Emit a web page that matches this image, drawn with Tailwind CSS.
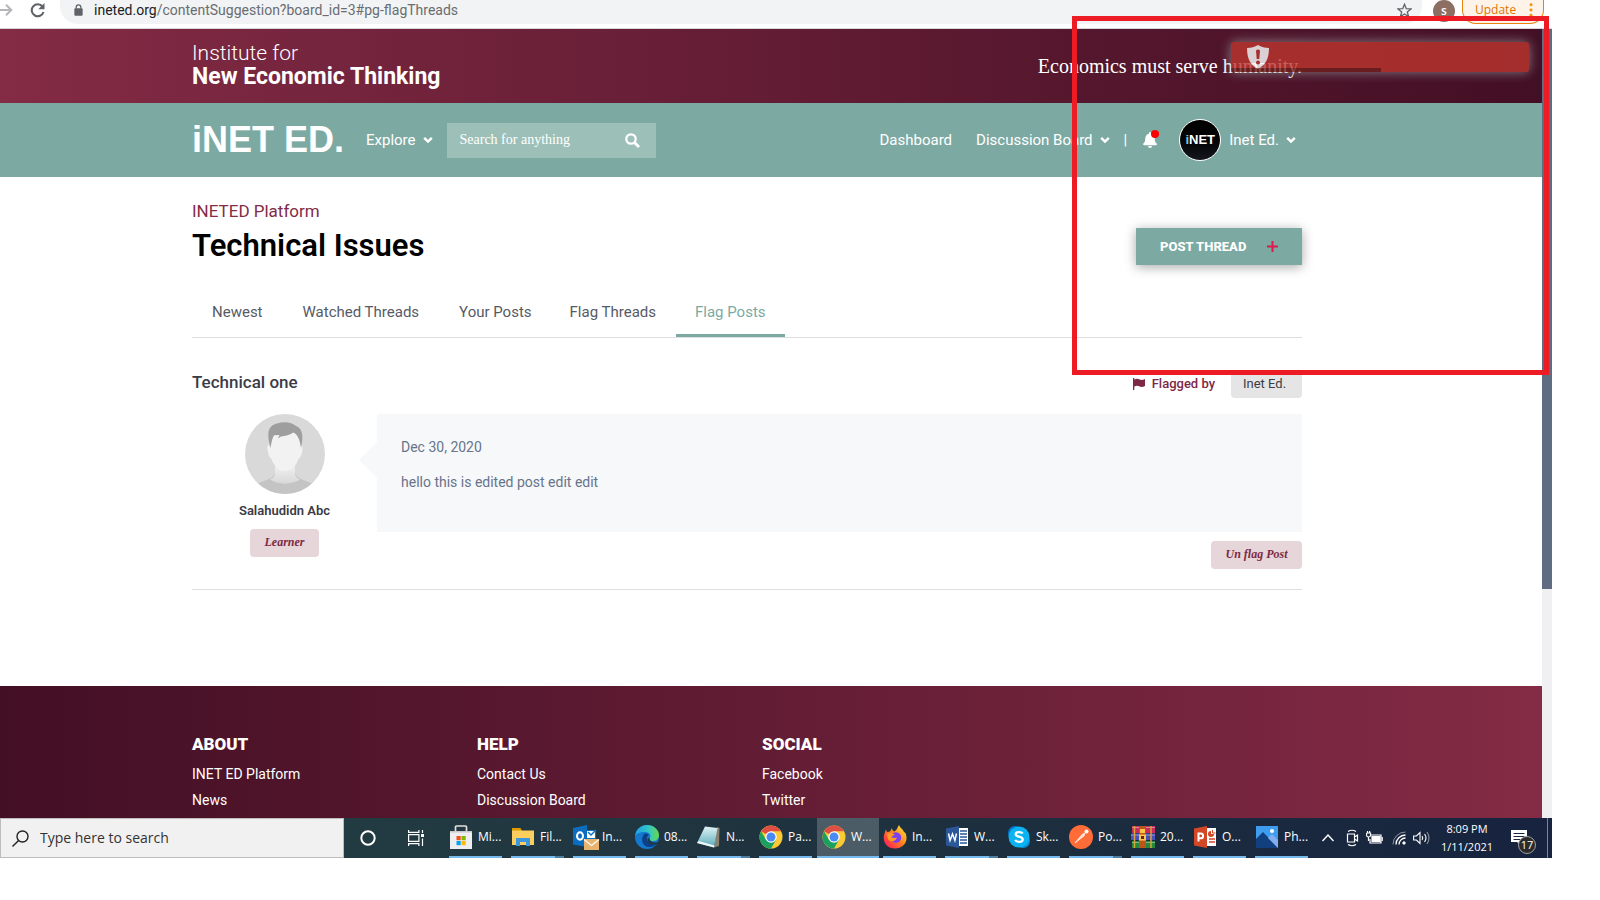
<!DOCTYPE html>
<html lang="en">
<head>
<meta charset="utf-8">
<title>INET ED - Technical Issues</title>
<script src="https://cdn.jsdelivr.net/npm/@tailwindcss/browser@4"></script>
</head>
<body class="bg-white pr-12 font-['Roboto',sans-serif] text-[#3b3b47]">
<svg class="hidden">
  <symbol id="chev" viewBox="0 0 10 8"><path d="M1.2 1.8 5 5.6 8.8 1.8" fill="none" stroke="currentColor" stroke-width="2.4"/></symbol>
  <symbol id="chrome" viewBox="0 0 48 48">
    <circle cx="24" cy="24" r="23" fill="#fbc934"/>
    <path d="M24 24 4.1 12.5A23 23 0 0 1 43.9 12.5H24Z" fill="#dd4f43"/>
    <path d="M4.1 12.5A23 23 0 0 0 24 47L34 29.7 24 24 14 29.7Z" fill="#1aa15f"/>
    <circle cx="24" cy="24" r="11.500" fill="#fff"/><circle cx="24" cy="24" r="9" fill="#4a8af4"/>
  </symbol>
</svg>

<div class="relative">
  <!-- Browser toolbar -->
  <div class="flex h-[29px] items-start border-b border-[#d5d7da] bg-white font-['Open_Sans',sans-serif]">
    <button aria-label="Forward" class="mt-1 h-3 w-[13px]"><svg viewBox="0 0 13 12" class="h-3 w-[13px]" fill="none" stroke="#b4b6b9" stroke-width="2"><path d="M0 6h11M6 .8 11.3 6 6 11.2"/></svg></button>
    <button aria-label="Reload" class="mt-[3px] ml-4 h-[15px] w-[17px]"><svg viewBox="0 0 16 15" class="h-[15px] w-[17px]"><path d="M13 3.6A6 6 0 1 0 14 9" fill="none" stroke="#5f6368" stroke-width="2.1"/><path d="M15 0v6.3H8.8Z" fill="#5f6368"/></svg></button>
    <div class="ml-[14px] flex h-6 flex-1 items-start rounded-b-[18px] bg-[#f1f3f4] pr-[10px] pl-[14px]">
      <svg viewBox="0 0 10 13" class="mt-1 h-3 w-[9px]"><path d="M2.4 5V3.4a2.6 2.6 0 0 1 5.2 0V5" fill="none" stroke="#5f6368" stroke-width="1.4"/><rect x=".4" y="4.6" width="9.2" height="8.2" rx="1" fill="#5f6368"/></svg>
      <p class="ml-[11px] font-['Roboto',sans-serif] text-sm leading-5 text-[#6a6d71]"><span class="text-[#202124]">ineted.org</span>/contentSuggestion?board_id=3#pg-flagThreads</p>
      <button aria-label="Bookmark" class="mt-[3px] ml-auto"><svg viewBox="0 0 16 16" class="h-[15px] w-[15px]"><path d="M8 1.300 9.900 6l5 .3-3.900 3.200 1.300 4.900L8 11.700l-4.300 2.700L5 9.500 1.100 6.300l5-.3Z" fill="none" stroke="#5f6368" stroke-width="1.400"/></svg></button>
    </div>
    <span class="ml-[11px] flex h-[22px] w-[22px] items-center justify-center rounded-full bg-[#8d6e63] text-xs font-semibold text-white">s</span>
    <button class="mr-2 ml-[7px] flex h-6 w-[82px] items-start justify-between rounded-b-[14px] border border-t-0 border-[#e8820c] bg-[#fdf3e8] pr-[10px] pl-3 text-xs leading-5 text-[#e37400]">Update
      <svg viewBox="0 0 4 16" class="mt-[3px] h-[14px] w-1" fill="#f29111"><circle cx="2" cy="2" r="1.700"/><circle cx="2" cy="8" r="1.700"/><circle cx="2" cy="14" r="1.700"/></svg></button>
  </div>

  <div class="flex">
    <div class="min-w-0 flex-1">
      <!-- Institute header -->
      <header class="flex h-[74px] items-center bg-linear-to-r from-[#842b45] to-[#430f24] pl-48 text-white">
        <div class="flex w-[1110px] items-center justify-between">
          <a href="#" class="block pb-[2px] leading-6"><span class="block text-[21px] font-light">Institute for</span><span class="block text-[23px] font-bold">New Economic Thinking</span></a>
          <p class="font-['Liberation_Serif',serif] text-xl">Economics must serve humanity.</p>
        </div>
      </header>
      <!-- Navigation -->
      <nav class="flex h-[74px] items-center bg-[#7da9a3] pl-48 text-[15px] text-white">
        <div class="flex w-[1110px] items-center">
          <a href="#" class="w-[150px] font-['Liberation_Sans',sans-serif] text-4xl leading-[44px] font-bold whitespace-nowrap">iNET ED.</a>
          <button class="ml-6 flex items-center gap-[7px]">Explore <svg class="h-2 w-[10px]"><use href="#chev"/></svg></button>
          <form class="ml-[14px] flex h-[35px] w-[209px] items-center bg-[#9cbfb8] pr-4 pl-[13px]">
            <input type="text" aria-label="Search for anything" placeholder="Search for anything" class="w-full min-w-0 bg-transparent font-['Liberation_Serif',serif] text-sm text-white outline-none placeholder:text-white">
            <button type="button" aria-label="Search"><svg viewBox="0 0 15 15" class="h-[15px] w-[15px]" fill="none" stroke="#fff"><circle cx="6" cy="6" r="4.700" stroke-width="2.300"/><path d="m9.500 9.500 4.500 4.500" stroke-width="2.900"/></svg></button>
          </form>
          <a href="#" class="ml-auto">Dashboard</a>
          <button class="ml-6 flex items-center gap-[7px]">Discussion Board <svg class="h-2 w-[10px]"><use href="#chev"/></svg></button>
          <span class="ml-[14px]">|</span>
          <button aria-label="Notifications" class="relative ml-4 h-4 w-[14px]"><svg viewBox="0 0 14 16" class="h-4 w-[14px]" fill="#fff"><path d="M7 0a1 1 0 0 0-1 1v.7C3.700 2.200 2.300 4 2.300 6.400c0 2.900-.9 4-1.900 5.100-.7.800-.2 1.700.7 1.700h11.800c.9 0 1.400-.9.700-1.700-1-1.100-1.900-2.200-1.900-5.100C11.700 4 10.300 2.200 8 1.700V1a1 1 0 0 0-1-1ZM5 14a2 2 0 0 0 4 0Z"/></svg><span class="absolute -top-[2px] -right-[2px] h-2 w-2 rounded-full bg-[#ff0000]"></span></button>
          <span class="ml-[22px] flex h-[42px] w-[42px] items-center justify-center rounded-full border border-white bg-linear-to-b from-black to-[#17181f] font-['Liberation_Sans',sans-serif] text-[13px] font-bold"><span class="text-[#7cc3e8]">i</span>NET</span>
          <button class="mr-[6px] ml-2 flex items-center gap-[7px]">Inet Ed. <svg class="h-2 w-[10px]"><use href="#chev"/></svg></button>
        </div>
      </nav>

      <!-- Board -->
      <main class="ml-48 min-h-[509px] w-[1110px] pt-[22px]">
        <div class="flex items-start justify-between">
          <div>
            <p class="text-[17px] leading-6 text-[#842b45]">INETED Platform</p>
            <h1 class="text-[31px] leading-[46px] font-semibold text-black">Technical Issues</h1>
          </div>
          <button class="mt-[29px] flex h-[37px] w-[166px] items-center justify-between bg-[#7da9a3] pr-6 pl-6 text-[13px] font-extrabold text-white shadow-[0_2px_12px_rgba(0,0,0,0.35)]">POST THREAD
            <svg viewBox="0 0 11 11" class="h-[11px] w-[11px]" stroke="#e0194f" stroke-width="2"><path d="M5.500 0v11M0 5.500h11"/></svg></button>
        </div>
        <div class="mt-5 flex h-[49px] border-b border-[#dfdfe0] text-[15px] text-[#565b66]">
          <a href="#" class="px-5 pt-3">Newest</a>
          <a href="#" class="px-5 pt-3">Watched Threads</a>
          <a href="#" class="px-5 pt-3">Your Posts</a>
          <a href="#" class="pr-5 pl-[18px] pt-3">Flag Threads</a>
          <a href="#" class="border-b-[3px] border-[#7da9a3] px-[19px] pt-3 text-[#7da9a3]">Flag Posts</a>
        </div>
        <div class="mt-8 flex h-7 items-center">
          <h2 class="pb-[2px] text-[17px] font-medium">Technical one</h2>
          <svg viewBox="0 0 12 12" class="ml-auto h-3 w-3" fill="#7d2945"><path d="M0 0h1.300v12H0ZM1.300 1.500c2.500-1.300 4-.7 5.400 0 1.500.7 3 .7 5.300-.5v7c-2.300 1.200-3.800 1.200-5.300.5-1.400-.7-2.900-1.300-5.400 0Z"/></svg>
          <span class="ml-[7px] text-[13px] font-medium text-[#7d2945]">Flagged by</span>
          <span class="ml-4 flex h-7 w-[71px] items-center rounded bg-[#e6e5e5] pl-3 text-[13px]">Inet Ed.</span>
        </div>
        <article class="mt-4 flex border-b border-[#dfdfe0] pb-5">
          <div class="flex w-[185px] flex-col items-center">
            <svg viewBox="0 0 80 80" class="h-20 w-20">
              <defs><clipPath id="disc"><circle cx="40" cy="40" r="40"/></clipPath><linearGradient id="neck" x2="0" y2="1"><stop offset=".3" stop-color="#ececec"/><stop offset="1" stop-color="#d8d8d8"/></linearGradient></defs>
              <g clip-path="url(#disc)"><path d="M0 0h80v80H0Z" fill="#d9d9d9"/>
              <path d="M8 72C20 65 28 66 30 59V48h20v11c2 7 10 6 22 13v8H8Z" fill="#c4c4c4"/>
              <path d="M25 65.500c4-2 5-3 5-8V48h20v9.500c0 5 1 6 5 8-7 5.500-23 5.500-30 0Z" fill="url(#neck)"/>
              <path d="M24.500 31c-2-.5-2.500 2-1.800 6 .6 3.500 1.800 7 3.800 8 2 6 7 12 13.500 12S51.500 51 53.500 45c2-1 3.200-4.500 3.800-8 .7-4 .2-6.500-1.800-6V17h-31Z" fill="#f2f2f2"/>
              <path d="M25.500 34C22 20 22 12 32 9.500c7-2.500 15-1.500 19 2.500 6 2 8 9 5 22-1-8-3-13-7.500-15.500-3.500 2.500-8 3.500-12.500 4l-3 2 1.500-3.500-5.500.3c-2 3.500-2.500 7-3.500 12.700Z" fill="#9e9e9e"/></g>
            </svg>
            <p class="mt-[7px] text-[13px] leading-5 font-semibold">Salahudidn Abc</p>
            <span class="mt-2 flex h-7 w-[69px] items-center justify-center rounded bg-[#e6d5d9] pb-[2px] font-['Liberation_Serif',serif] text-xs font-bold text-[#7d2945] italic">Learner</span>
          </div>
          <div class="relative flex flex-1 flex-col items-stretch">
            <svg viewBox="0 0 19 38" class="absolute top-[27px] -left-[18px] h-[38px] w-[19px]"><path d="M19 0 0 19l19 19Z" fill="#f7f8fa"/></svg>
            <div class="h-[118px] bg-[#f7f8fa] px-6 pt-6 text-sm leading-[18px] text-[#67748a]">
              <p>Dec 30, 2020</p>
              <p class="mt-[17px]">hello this is edited post edit edit</p>
            </div>
            <button class="mt-[9px] h-7 w-[91px] self-end rounded bg-[#e6d5d9] pb-[2px] font-['Liberation_Serif',serif] text-xs font-bold text-[#7d2945] italic">Un flag Post</button>
          </div>
        </article>
      </main>

      <footer class="h-[132px] bg-linear-to-r from-[#430f24] to-[#842b45] pt-[46px] pl-48 text-white">
        <div class="flex text-sm leading-[26px]">
          <div class="flex w-[285px] flex-col"><h3 class="mb-[5px] text-[17px] leading-6 font-black">ABOUT</h3><a href="#">INET ED Platform</a><a href="#">News</a></div>
          <div class="flex w-[285px] flex-col"><h3 class="mb-[5px] text-[17px] leading-6 font-black">HELP</h3><a href="#">Contact Us</a><a href="#">Discussion Board</a></div>
          <div class="flex w-[285px] flex-col"><h3 class="mb-[5px] text-[17px] leading-6 font-black">SOCIAL</h3><a href="#">Facebook</a><a href="#">Twitter</a></div>
        </div>
      </footer>
    </div>
    <!-- Page scrollbar -->
    <div class="w-[10px] bg-[#f0f0f2]"><div class="h-[560px] bg-[#5f6c81]"></div></div>
  </div>

  <!-- Taskbar -->
  <div class="flex h-10 bg-linear-to-r from-[#223a42] from-25% via-[#1e303e] via-60% to-[#17233f] font-['Open_Sans',sans-serif] text-xs text-white">
    <label class="flex w-[344px] items-center border border-[#bdbdbd] bg-[#f1f1f1] pl-[11px]">
      <svg viewBox="0 0 17 17" class="h-[17px] w-[17px] shrink-0" fill="none" stroke="#222" stroke-width="1.400"><circle cx="10.500" cy="6.500" r="5.500"/><path d="M6.600 10.400.5 16.500"/></svg>
      <input type="text" aria-label="Search Windows" placeholder="Type here to search" class="ml-[11px] w-64 bg-transparent text-sm outline-none placeholder:text-[#333]">
    </label>
    <button aria-label="Cortana" class="ml-4 w-4"><svg viewBox="0 0 16 16" class="h-4 w-4"><circle cx="8" cy="8" r="6.700" fill="none" stroke="#fff" stroke-width="2"/></svg></button>
    <button aria-label="Task view" class="mr-[21px] ml-8 w-4"><svg viewBox="0 0 16 16" class="h-4 w-4" fill="none" stroke="#fff" stroke-width="1.200"><path d="M.6 0v2.400h10.300V0M.6 16v-2.400h10.300V16M.6 4.600h10.300v6.800H.6ZM14.500 0v3M14.500 8.500V16"/><path d="M13 4h3v3h-3Z" fill="#fff" stroke="none"/></svg></button>

    <button class="flex w-[62px] flex-col pl-1"><span class="flex h-[38px] items-center gap-[5px]"><svg viewBox="0 0 24 24" class="h-6 w-6"><path d="M6.500 7V2q0-1 1-1h9q1 0 1 1v5" fill="none" stroke="#e1e1dc" stroke-width="1.700"/><path d="M1 6h22v18H1Z" fill="#eeeef0"/><path d="M1 6h22v1.500H1Z" fill="#c9c9cb"/><path d="M7.500 11h4.200v4.200H7.500Z" fill="#f25022"/><path d="M12.500 11h4.200v4.200h-4.200Z" fill="#7fba00"/><path d="M7.500 16h4.200v4.200H7.500Z" fill="#00a4ef"/><path d="M12.500 16h4.200v4.200h-4.200Z" fill="#ffb900"/></svg>Mi...</span><span class="h-[2px] w-[53px] bg-[#76b9ed]"></span></button>
    <button class="flex w-[62px] flex-col pl-1"><span class="flex h-[38px] items-center gap-[5px]"><svg viewBox="0 0 24 24" class="h-6 w-6"><path d="M1 3h8.500l1.500 3H1Z" fill="#e09a00"/><path d="M1 5.500h22V20H1Z" fill="#fbce5d"/><path d="M5 21v-8h14v8h-4v-4H9v4Z" fill="#3e97dd"/></svg>Fil...</span><span class="h-[2px] w-[53px] border-r-[9px] border-[#4f7e9f] bg-[#76b9ed]"></span></button>
    <button class="flex w-[62px] flex-col pl-1"><span class="flex h-[38px] items-center gap-[5px]"><svg viewBox="0 0 24 24" class="h-6 w-6 overflow-visible"><path d="M12 5h11v12H12Z" fill="#0a73c7"/><path d="M0 3 14 0v22L0 19.500Z" fill="#0a6dbf"/><path d="M14 6h8v7h-8Z" fill="#fff"/><path d="m15 7 3 3 5-5" fill="none" stroke="#0a73c7" stroke-width="1.500"/><ellipse cx="7" cy="11" rx="3" ry="3.700" fill="none" stroke="#fff" stroke-width="2"/><path d="M11 14h15v11H11Z" fill="#e8b36c"/><path d="m11 14.500 7.500 6 7.500-6" fill="none" stroke="#fff" stroke-width="1.200"/></svg>In...</span><span class="h-[2px] w-[53px] bg-[#76b9ed]"></span></button>
    <button class="flex w-[62px] flex-col pl-1"><span class="flex h-[38px] items-center gap-[5px]"><svg viewBox="0 0 24 24" class="h-6 w-6"><defs><linearGradient id="e1"><stop stop-color="#1e9fe8"/><stop offset=".6" stop-color="#35c8c0"/><stop offset="1" stop-color="#67d84a"/></linearGradient></defs><circle cx="12" cy="12" r="12" fill="#1578cf"/><path d="M0 11C1 4 6 0 12 0c7 0 12 5 12 10 0 4-3 6-6 6-3.500 0-4.500-1.500-3.500-2.500C17 10 14 7 10 7 5 7 1 9 0 11Z" fill="url(#e1)"/><path d="M9 9c-4 6-1 13 5 13 4 0 6-1.500 8-3.500-4 2-10 0-10-5 0-2 .5-3 2-3.500-1-1.500-3.500-2-5-1Z" fill="#0c3f85"/><path d="M24 16.500C21 18 15 18 14.500 13.500c1-1-2.500-.5-2 1.500C13 20 19 20 22.500 18.500Z" fill="#203640"/></svg>08...</span><span class="h-[2px] w-[53px] bg-[#76b9ed]"></span></button>
    <button class="flex w-[62px] flex-col pl-1"><span class="flex h-[38px] items-center gap-[5px]"><svg viewBox="0 0 24 24" class="h-6 w-6"><defs><linearGradient id="n1" x2="0" y2="1"><stop stop-color="#dff3f5"/><stop offset="1" stop-color="#57a9b8"/></linearGradient></defs><path d="m20 2 2.500 1-.5 18-5 1.500Z" fill="#8b8172"/><path d="M8 1.500 20.500 3 17 22.500 0 18Z" fill="url(#n1)"/><path d="M0 18 17 22.500l.5-2L1.500 16Z" fill="#eef6f7"/></svg>N...</span><span class="h-[2px] w-[53px] border-r-[9px] border-[#4f7e9f] bg-[#76b9ed]"></span></button>
    <button class="flex w-[62px] flex-col pl-1"><span class="flex h-[38px] items-center gap-[5px]"><svg class="h-6 w-6"><use href="#chrome"/></svg>Pa...</span><span class="h-[2px] w-[53px] bg-[#76b9ed]"></span></button>
    <button class="flex w-[62px] flex-col bg-[#4b5c66]"><span class="flex h-[38px] items-center gap-[5px] pl-[5px]"><svg class="h-6 w-6"><use href="#chrome"/></svg>W...</span><span class="h-[2px] w-full bg-[#76b9ed]"></span></button>
    <button class="flex w-[62px] flex-col pl-1"><span class="flex h-[38px] items-center gap-[5px]"><svg viewBox="0 0 24 24" class="h-6 w-6"><defs><linearGradient id="f1" x1="1" x2="0" y2="1"><stop stop-color="#fff044"/><stop offset=".45" stop-color="#ff8a1d"/><stop offset=".8" stop-color="#ff3647"/><stop offset="1" stop-color="#e31587"/></linearGradient></defs><path d="M3 4c0 1.500.5 2.500 1.500 3L7 6.500 9 3c0 2 1 3 2.500 3.500L14 4c.5-2 1.500-3 2-4 1 3 4 4 5 7l1.500 1C26 17 20 23.500 12 23.500 4 23.500-.5 17 1 10Z" fill="url(#f1)"/><circle cx="13" cy="12.500" r="5.200" fill="#7b3ff2"/><path d="M4 9c3-2 6-1 8 1-2 0-3 1-3.500 2.500 2 0 3 1 5.500 0-1 4-6 5-9 2Z" fill="#ff9a22"/></svg>In...</span><span class="h-[2px] w-[53px] bg-[#76b9ed]"></span></button>
    <button class="flex w-[62px] flex-col pl-1"><span class="flex h-[38px] items-center gap-[5px]"><svg viewBox="0 0 24 24" class="h-6 w-6"><path d="M11 3h12v18H11Z" fill="#fff"/><path d="M15 6h7M15 9h7M15 12h7M15 15h7M15 18h7" stroke="#2b579a" stroke-width="1.300"/><path d="M1 3.500 14 1v22L1 20.500Z" fill="#2b579a"/><path d="m3.500 8.500 1.600 7L7.500 9l2.400 6.500 1.600-7" fill="none" stroke="#fff" stroke-width="1.500"/></svg>W...</span><span class="h-[2px] w-[53px] border-r-[9px] border-[#4f7e9f] bg-[#76b9ed]"></span></button>
    <button class="flex w-[62px] flex-col pl-1"><span class="flex h-[38px] items-center gap-[5px]"><svg viewBox="0 0 24 24" class="h-6 w-6"><circle cx="8" cy="8" r="7" fill="#0078d4"/><circle cx="16" cy="16" r="7" fill="#0a8fdc"/><circle cx="12" cy="12" r="10.500" fill="#0bb3f0"/><path d="M15.700 8.500c-1-1.800-7-2.200-7 .7 0 3.300 7 1.700 7 5.200 0 3.200-6.500 3-7.500.4" fill="none" stroke="#fff" stroke-width="2.300"/></svg>Sk...</span><span class="h-[2px] w-[53px] bg-[#76b9ed]"></span></button>
    <button class="flex w-[62px] flex-col pl-1"><span class="flex h-[38px] items-center gap-[5px]"><svg viewBox="0 0 24 24" class="h-6 w-6"><circle cx="12" cy="12" r="12" fill="#ff6c37"/><path d="m6 18 7.500-9 2.500-1-1 3L8.500 16Z" fill="#ffd9c8" stroke="#fff" stroke-width=".7"/><circle cx="17.500" cy="6.500" r="2" fill="#fff"/></svg>Po...</span><span class="h-[2px] w-[53px] border-r-[9px] border-[#4f7e9f] bg-[#76b9ed]"></span></button>
    <button class="flex w-[62px] flex-col pl-1"><span class="flex h-[38px] items-center gap-[5px]"><svg viewBox="0 0 24 24" class="h-6 w-6"><path d="M1 1h23v7H1Z" fill="#c92d5c"/><path d="M0 8.500h24V15H0Z" fill="#4b50b8"/><path d="M1 16h23v7H1Z" fill="#26883a"/><path d="M1 2.500h23M0 10h24M1 17.500h23" stroke="#fff" stroke-opacity=".4"/><path d="M8 1h7v22H8Z" fill="#b8561c"/><path d="M3.500 1v22M20 1v22" stroke="#d8a13a" stroke-width="1.500"/><path d="M9 4h5v4H9ZM8 9.500h7v6H8Z" fill="#ffc544"/><path d="M10 11h3v3h-3Z" fill="#5c2a12"/></svg>20...</span><span class="h-[2px] w-[53px] bg-[#76b9ed]"></span></button>
    <button class="flex w-[62px] flex-col pl-1"><span class="flex h-[38px] items-center gap-[5px]"><svg viewBox="0 0 24 24" class="h-6 w-6"><path d="M12 3h11v18H12Z" fill="#fff"/><path d="M16 14h6M16 17h6" stroke="#d24726" stroke-width="1.300"/><path d="M18 6a3 3 0 1 0 3 3h-3Z" fill="#d24726"/><path d="M19.500 5v3h3" fill="none" stroke="#d24726"/><path d="M1 3.500 14 1v22L1 20.500Z" fill="#d24726"/><path d="M5.500 16.500v-8h2.200a2.400 2.400 0 0 1 0 4.800H5.500" fill="none" stroke="#fff" stroke-width="2"/></svg>O...</span><span class="h-[2px] w-[53px] bg-[#76b9ed]"></span></button>
    <button class="flex w-[62px] flex-col pl-1"><span class="flex h-[38px] items-center gap-[5px]"><svg viewBox="0 0 24 24" class="h-6 w-6"><path d="M1 1h22v22H1Z" fill="#3f9df0"/><path d="m1 14 7-7 15 16H1Z" fill="#123f7d"/><path d="m13 13 4-4 6 6v8Z" fill="#82aef0"/><circle cx="17" cy="6" r="2" fill="#fff"/></svg>Ph...</span><span class="h-[2px] w-[53px] bg-[#76b9ed]"></span></button>

    <div class="ml-auto flex items-center pr-1">
      <svg viewBox="0 0 12 8" class="h-2 w-3" fill="none" stroke="#fff" stroke-width="1.400"><path d="m.5 7 5.500-6 5.500 6"/></svg>
      <svg viewBox="0 0 14 18" class="ml-[11px] h-[18px] w-[14px]" fill="none" stroke="#fff" stroke-width="1.200"><path d="M3 2.500q4-2.500 8 0M3 15.500q4 2.500 8 0M2.500 5h7v8h-7ZM9.500 8l3-2v6l-3-2"/></svg>
      <svg viewBox="0 0 17 14" class="ml-[7px] h-[14px] w-[17px]" fill="none" stroke="#fff" stroke-width="1.200"><path d="M5 4h10v8H4V8"/><path d="M6 5.500h8v5H6Z" fill="#fff"/><path d="M16.200 6v4M.6 2v2.500q0 1.500 1.900 1.500T4.500 4.500V2H.6M1.500 0v2M3.600 0v2M2.500 6v4"/></svg>
      <svg viewBox="0 0 14 14" class="ml-[9px] h-[14px] w-[14px]" fill="none" stroke="#fff"><path d="M1 13.500A12.500 12.500 0 0 1 13.500 1" stroke-opacity=".5"/><path d="M4 13.500A9.500 9.500 0 0 1 13.500 4M7 13.500A6.500 6.500 0 0 1 13.500 7" stroke-width="1.300"/><circle cx="12" cy="12" r="1.200" fill="#fff"/></svg>
      <svg viewBox="0 0 17 14" class="ml-[7px] h-[14px] w-[17px]" fill="none" stroke="#fff" stroke-width="1.100"><path d="M.6 5h2.800L7 1.500v11L3.400 9H.6Z"/><path d="M9 5q1.500 2 0 4M11.500 3q3 4 0 8"/><path d="M14 1q4 6 0 12" stroke-opacity=".5"/></svg>
      <div class="ml-[7px] w-[60px] text-center text-[11px] leading-[18px]"><p>8:09 PM</p><p>1/11/2021</p></div>
      <button aria-label="Notifications" class="relative ml-[13px] h-5 w-[33px]"><svg viewBox="0 0 18 18" class="h-[18px] w-[18px]"><path d="M1 1h16v12h-6v4l-4-4H1Z" fill="#fff"/><path d="M3.500 4.500h11M3.500 7.500h11M3.500 10.500h7" stroke="#1a2740"/></svg><span class="absolute top-2 left-2 flex h-[18px] w-[18px] items-center justify-center rounded-full border border-[#a0a0a0] bg-[#2b2b2b] text-[11px]">17</span></button>
    </div>
    <span class="mr-1 w-px bg-[#7b8494]"></span>
  </div>

  <!-- Error toast -->
  <div role="alert" class="absolute top-[42px] right-[23px] h-[30px] w-[298px] rounded-[3px] bg-[#bd362f] opacity-80 shadow-[0_0_12px_#999]">
    <svg viewBox="0 0 22 24" class="mt-[3px] ml-4 h-6 w-[22px]"><path d="M11 0C8 2 4 3 0 3c0 10 3 17 11 21 8-4 11-11 11-21-4 0-8-1-11-3Z" fill="#fff"/><path d="M9 5.500q2-2 4 0L12.300 14H9.700Z" fill="#bd362f"/><circle cx="11" cy="17.500" r="2" fill="#bd362f"/></svg>
    <span class="absolute bottom-0 left-0 h-1 w-[150px] bg-black/40"></span>
  </div>
  <!-- Highlight frame -->
  <div class="pointer-events-none absolute top-4 right-[3px] h-[359px] w-[477px] border-[5px] border-[#ed1c24]"></div>
</div>
</body>
</html>
